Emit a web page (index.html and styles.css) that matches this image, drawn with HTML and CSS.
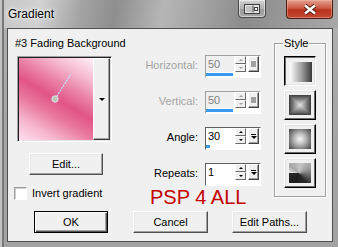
FILE: index.html
```html
<!DOCTYPE html>
<html lang="en">
<head>
	<meta charset="UTF-8">
	<title>Gradient</title>
	<link rel="stylesheet" href="styles.css">
</head>
<body>
	<div class="window">
		<div class="titlebar">
			<span class="title">Gradient</span>
			<div class="cap-btn cap-roll">
				<svg width="16" height="10" viewBox="0 0 16 10">
					<rect x="0.5" y="0.5" width="15" height="9" fill="#e6e6e6" stroke="#3c3c3c"/>
					<path d="M3 2v6M5 2v6M7 2v6" stroke="#9a9a9a"/>
					<path d="M9 1.5v7" stroke="#3c3c3c"/>
					<rect x="10.5" y="3.5" width="3" height="3" fill="#fff" stroke="#3c3c3c"/>
				</svg>
			</div>
			<div class="cap-btn cap-close">
				<svg width="14" height="11" viewBox="0 0 14 11">
					<path d="M2 1.5L12 9.5M12 1.5L2 9.5" stroke="#4a1a12" stroke-width="4.2"/>
					<path d="M2 1.5L12 9.5M12 1.5L2 9.5" stroke="#fff" stroke-width="2.4"/>
				</svg>
			</div>
		</div>
		<div class="client">
			<div class="main">
				<div class="col-left">
					<div class="grad-name">#3 Fading Background</div>
					<div class="preview">
						<div class="preview-swatch">
							<svg width="74" height="82" viewBox="0 0 74 82">
								<path d="M36 41L52 16" stroke="#bfe6ff" stroke-width="1.2" stroke-dasharray="2 1"/>
								<circle cx="36" cy="41" r="3.2" fill="#b9c9b4" stroke="#e8e8ff" stroke-width="0.8"/>
							</svg>
						</div>
						<div class="preview-drop"><span class="tri-down"></span></div>
					</div>
					<div class="btn btn-edit">Edit...</div>
					<div class="check-row">
						<span class="checkbox"></span>
						<span>Invert gradient</span>
					</div>
				</div>

				<div class="col-mid">
					<div class="fields">
						<div class="field-row">
							<span class="field-label disabled">Horizontal:</span>
							<div class="spin disabled">
								<div class="spin-main">
									<span class="spin-value">50</span>
									<span class="spin-arrows"><span class="spin-arrow up"></span><span class="spin-arrow down"></span></span>
									<span class="spin-fly"><span class="fly-square"></span></span>
								</div>
								<div class="spin-track"><span class="spin-fill" style="width: 50%"></span></div>
							</div>
						</div>
						<div class="field-row">
							<span class="field-label disabled">Vertical:</span>
							<div class="spin disabled">
								<div class="spin-main">
									<span class="spin-value">50</span>
									<span class="spin-arrows"><span class="spin-arrow up"></span><span class="spin-arrow down"></span></span>
									<span class="spin-fly"><span class="fly-square"></span></span>
								</div>
								<div class="spin-track"><span class="spin-fill" style="width: 50%"></span></div>
							</div>
						</div>
						<div class="field-row">
							<span class="field-label">Angle:</span>
							<div class="spin">
								<div class="spin-main">
									<span class="spin-value">30</span>
									<span class="spin-arrows"><span class="spin-arrow up"></span><span class="spin-arrow down"></span></span>
									<span class="spin-fly"><span class="fly-bar"></span><span class="fly-tri"></span></span>
								</div>
								<div class="spin-track"><span class="spin-fill" style="width: 8%"></span></div>
							</div>
						</div>
						<div class="field-row">
							<span class="field-label">Repeats:</span>
							<div class="spin">
								<div class="spin-main">
									<span class="spin-value">1</span>
									<span class="spin-arrows"><span class="spin-arrow up"></span><span class="spin-arrow down"></span></span>
									<span class="spin-fly"><span class="fly-bar"></span><span class="fly-tri"></span></span>
								</div>
								<div class="spin-track"><span class="spin-fill" style="width: 0%"></span></div>
							</div>
						</div>
					</div>
					<div class="watermark">PSP 4 ALL</div>
				</div>

				<div class="style-group">
					<span class="group-label">Style</span>
					<div class="style-list">
						<div class="style-btn pressed"><span class="style-icon icon-linear"></span></div>
						<div class="style-btn">
							<svg class="style-icon" width="22" height="20" viewBox="0 0 22 20" shape-rendering="crispEdges">
								<defs>
									<linearGradient id="gt" gradientUnits="userSpaceOnUse" x1="0" y1="0" x2="0" y2="10"><stop offset="0" stop-color="#3c3c3c"/><stop offset="1" stop-color="#e4e4e4"/></linearGradient>
									<linearGradient id="gb" gradientUnits="userSpaceOnUse" x1="0" y1="20" x2="0" y2="10"><stop offset="0" stop-color="#3c3c3c"/><stop offset="1" stop-color="#e4e4e4"/></linearGradient>
									<linearGradient id="gl" gradientUnits="userSpaceOnUse" x1="0" y1="0" x2="11" y2="0"><stop offset="0" stop-color="#3c3c3c"/><stop offset="1" stop-color="#e4e4e4"/></linearGradient>
									<linearGradient id="gr" gradientUnits="userSpaceOnUse" x1="22" y1="0" x2="11" y2="0"><stop offset="0" stop-color="#3c3c3c"/><stop offset="1" stop-color="#e4e4e4"/></linearGradient>
								</defs>
								<rect width="22" height="20" fill="#8a8a8a"/>
								<polygon points="0,0 22,0 11,10" fill="url(#gt)"/>
								<polygon points="0,20 22,20 11,10" fill="url(#gb)"/>
								<polygon points="0,0 0,20 11,10" fill="url(#gl)"/>
								<polygon points="22,0 22,20 11,10" fill="url(#gr)"/>
							</svg>
						</div>
						<div class="style-btn"><span class="style-icon icon-radial"></span></div>
						<div class="style-btn"><span class="style-icon icon-sunburst"></span></div>
					</div>
				</div>
			</div>

			<div class="btn-row">
				<div class="btn btn-default btn-ok">OK</div>
				<div class="btn btn-cancel">Cancel</div>
				<div class="btn btn-paths">Edit Paths...</div>
			</div>
		</div>
	</div>
</body>
</html>
```

FILE: styles.css
```css
body {
	margin: 0;
	font-family: "Liberation Sans", Arial, sans-serif;
	font-size: 11px;
	color: #000;
	background: #a8a8a8;
}
.window {
	width: 338px;
	height: 247px;
	display: flex;
	flex-direction: column;
	background: linear-gradient(to bottom, #b4b4b4, #a6a6a6 40%, #a2a2a2);
	box-shadow: inset 2px 0 0 #c2c2c2, inset 4px 0 0 #787878;
	overflow: hidden;
}
.titlebar {
	height: 28px;
	display: flex;
	align-items: flex-start;
	flex-shrink: 0;
	background: linear-gradient(100deg, #c6c6c6 0%, #d2d2d2 12%, #a4a4a4 24%, #8e8e8e 34%, #b6b6b6 48%, #a2a2a2 60%, #8c8c8c 72%, #9c9c9c 88%, #a8a8a8 100%);
	box-shadow: inset 2px 0 0 #c2c2c2, inset 4px 0 0 #787878;
}
.title {
	margin: 7px 0 0 8px;
	font-size: 12px;
	line-height: 14px;
	color: #000;
	text-shadow: 0 0 6px #fff, 0 0 3px #fff;
}
.cap-btn {
	display: flex;
	align-items: center;
	justify-content: center;
	box-sizing: border-box;
	border: 1px solid #4a4a4a;
	border-top: none;
	border-radius: 0 0 4px 4px;
}
.cap-roll {
	margin-left: auto;
	width: 28px;
	height: 18px;
	background: linear-gradient(to bottom, #d4d4d4, #b0b0b0 50%, #9a9a9a 51%, #a8a8a8);
	box-shadow: inset 0 0 0 1px rgba(255, 255, 255, 0.5);
}
.cap-close {
	margin: 0 5px 0 20px;
	width: 47px;
	height: 19px;
	border-color: #4a1e16;
	background: linear-gradient(to bottom, #e4a090, #cc5a44 45%, #b8321c 55%, #c44a30);
	box-shadow: inset 0 0 0 1px rgba(255, 200, 180, 0.4);
}
.client {
	margin-left: 7px;
	width: 326px;
	height: 214px;
	box-sizing: border-box;
	border: 1px solid #4e4e4e;
	background-color: #f0f0f0;
	display: flex;
	flex-direction: column;
}
.main {
	height: 182px;
	display: flex;
	align-items: flex-start;
}
.col-left {
	margin-left: 6px;
	width: 100px;
	display: flex;
	flex-direction: column;
	align-items: flex-start;
}
.grad-name {
	margin: 8px 0 0 1px;
	line-height: 13px;
	white-space: nowrap;
}
.preview {
	margin: 6px 0 0 3px;
	width: 95px;
	height: 86px;
	box-sizing: border-box;
	border: 1px solid;
	border-color: #a0a0a0 #fff #fff #a0a0a0;
	box-shadow: inset 1px 1px 0 #202020, inset -1px -1px 0 #e3e3e3;
	padding: 1px;
	display: flex;
}
.preview-swatch {
	width: 74px;
	height: 82px;
	flex-shrink: 0;
	background: linear-gradient(30deg, #ffe0ee 0%, #f6b6cd 18%, #e9779d 36%, #e15486 50%, #ea7fa4 64%, #f5b8cf 80%, #fff0f8 100%);
}
.preview-swatch svg {
	display: block;
}
.preview-drop {
	width: 17px;
	height: 82px;
	box-sizing: border-box;
	border: 1px solid;
	border-color: #fff #404040 #404040 #fff;
	box-shadow: inset -1px -1px 0 #a0a0a0;
	background: #f0f0f0;
	display: flex;
	align-items: center;
	justify-content: center;
}
.tri-down {
	border-left: 3px solid transparent;
	border-right: 3px solid transparent;
	border-top: 3px solid #000;
	margin-left: 1px;
}
.btn {
	box-sizing: border-box;
	height: 22px;
	border: 1px solid;
	border-color: #fff #505050 #505050 #fff;
	box-shadow: inset -1px -1px 0 #a0a0a0, inset 1px 1px 0 #e8e8e8;
	background: #f0f0f0;
	display: flex;
	align-items: center;
	justify-content: center;
	line-height: 13px;
}
.btn-default {
	border-color: #000;
	box-shadow: inset 1px 1px 0 #fff, inset -1px -1px 0 #505050, inset -2px -2px 0 #a0a0a0;
}
.btn-edit {
	margin: 11px 0 0 15px;
	width: 74px;
}
.check-row {
	margin-top: 12px;
	display: flex;
	align-items: center;
	gap: 5px;
	line-height: 13px;
}
.checkbox {
	width: 13px;
	height: 13px;
	box-sizing: border-box;
	border: 1px solid;
	border-color: #a0a0a0 #fff #fff #a0a0a0;
	box-shadow: inset 1px 1px 0 #d0d0d0;
	background: #fff;
}
.col-mid {
	width: 147px;
	display: flex;
	flex-direction: column;
}
.fields {
	padding-top: 26px;
	display: flex;
	flex-direction: column;
	gap: 13px;
}
.field-row {
	height: 23px;
	display: flex;
	justify-content: flex-end;
	align-items: flex-start;
}
.field-label {
	padding-top: 4px;
	margin-right: 7px;
	line-height: 13px;
}
.field-label.disabled { color: #a3a3a3; }
.spin {
	width: 56px;
	height: 23px;
	box-sizing: border-box;
	border: 1px solid;
	border-color: #606060 #fff #fff #606060;
	background: #fff;
	display: flex;
	flex-direction: column;
}
.spin.disabled {
	border-color: #a0a0a0 #fff #fff #a0a0a0;
}
.spin-main {
	height: 17px;
	display: flex;
	align-items: flex-start;
}
.spin-value {
	width: 28px;
	height: 16px;
	box-sizing: border-box;
	padding: 2px 0 0 2px;
	line-height: 13px;
}
.spin.disabled .spin-value {
	color: #808080;
	background: #f0f0f0;
}
.spin-arrows {
	width: 11px;
	margin-left: 1px;
	display: flex;
	flex-direction: column;
}
.spin-arrow {
	height: 8px;
	box-sizing: border-box;
	border: 1px solid;
	border-color: #fff #696969 #696969 #fff;
	background: #f0f0f0;
	display: flex;
	align-items: center;
	justify-content: center;
}
.spin-arrow::after {
	content: '';
	border-left: 2px solid transparent;
	border-right: 2px solid transparent;
}
.spin-arrow.up::after { border-bottom: 2px solid #000; }
.spin-arrow.down::after { border-top: 2px solid #000; }
.spin.disabled .spin-arrow.up::after { border-bottom-color: #a0a0a0; }
.spin.disabled .spin-arrow.down::after { border-top-color: #a0a0a0; }
.spin-fly {
	width: 11px;
	height: 16px;
	margin-left: 2px;
	box-sizing: border-box;
	border: 1px solid;
	border-color: #fff #404040 #404040 #fff;
	box-shadow: inset -1px -1px 0 #a0a0a0;
	background: #f0f0f0;
	display: flex;
	flex-direction: column;
	align-items: center;
	justify-content: center;
	gap: 1px;
}
.fly-square {
	width: 5px;
	height: 6px;
	background: #a0a0a0;
}
.fly-bar {
	width: 5px;
	height: 1px;
	background: #000;
}
.fly-tri {
	border-left: 3px solid transparent;
	border-right: 3px solid transparent;
	border-top: 3px solid #000;
}
.spin-track {
	height: 3px;
	background: #fff;
	display: flex;
}
.spin-fill {
	height: 3px;
	background: #3a9af0;
}
.watermark {
	margin: 1px 0 0 36px;
	font-size: 20px;
	line-height: 20px;
	color: #c40000;
	white-space: nowrap;
}
.style-group {
	margin: 14px 0 0 13px;
	width: 52px;
	height: 154px;
	box-sizing: border-box;
	border: 1px solid #a0a0a0;
	box-shadow: 1px 1px 0 #fff, inset 1px 1px 0 #fff;
	display: flex;
	flex-direction: column;
}
.group-label {
	align-self: flex-start;
	margin: -7px 0 0 8px;
	padding: 0 1px;
	line-height: 13px;
	background: #f0f0f0;
}
.style-list {
	margin: 6px 0 0 9px;
	display: flex;
	flex-direction: column;
	gap: 4px;
}
.style-btn {
	width: 32px;
	height: 30px;
	box-sizing: border-box;
	border: 1px solid;
	border-color: #fff #000 #000 #fff;
	box-shadow: inset -1px -1px 0 #696969, inset 1px 1px 0 #e3e3e3;
	background: #f0f0f0;
	display: flex;
	align-items: center;
	justify-content: center;
}
.style-btn.pressed {
	border-color: #000 #fff #fff #000;
	box-shadow: inset 1px 1px 0 #696969, inset -1px -1px 0 #e3e3e3;
	padding: 2px 0 0 2px;
}
.style-icon {
	display: block;
	width: 22px;
	height: 20px;
}
.icon-linear {
	background: linear-gradient(to right, #fdfdfd 0%, #e8e8e8 12%, #9a9a9a 55%, #3a3a3a 100%);
}
.icon-radial {
	background: radial-gradient(circle at center, #f6f6f6 0%, #c0c0c0 35%, #7a7a7a 70%, #404040 100%);
}
.icon-sunburst {
	background: conic-gradient(from 270deg at 45% 52%, #ffffff 0deg, #d8d8d8 10deg, #a6a6a6 40deg, #c6c6c6 100deg, #a0a0a0 150deg, #6a6a6a 190deg, #2a2a2a 230deg, #1c1c1c 300deg, #282828 360deg);
}
.btn-row {
	padding-left: 26px;
	display: flex;
}
.btn-ok { width: 74px; }
.btn-cancel {
	margin-left: 25px;
	width: 75px;
}
.btn-paths {
	margin-left: 24px;
	width: 75px;
}
```
